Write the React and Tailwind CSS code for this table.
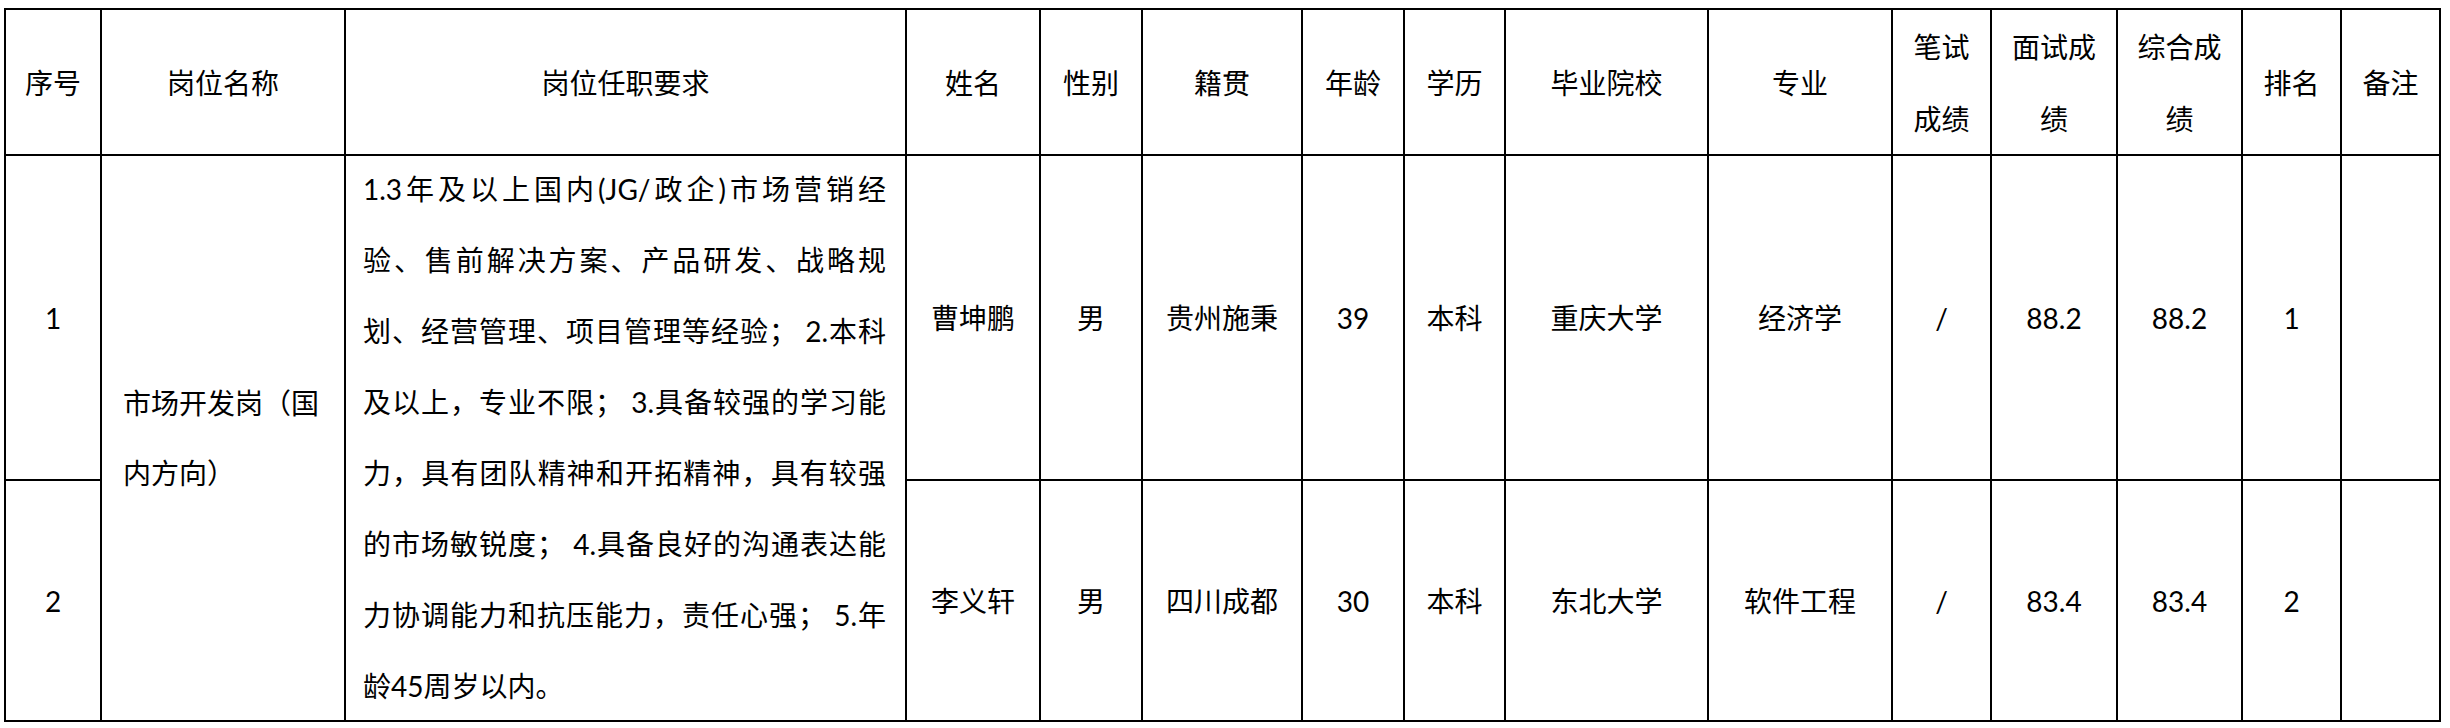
import React from 'react';

const colWidths = ['w-[96px]', 'w-[244px]', 'w-[561px]', 'w-[134px]', 'w-[102px]', 'w-[160px]', 'w-[102px]', 'w-[101px]', 'w-[203px]', 'w-[184px]', 'w-[99px]', 'w-[126px]', 'w-[125px]', 'w-[99px]', 'w-[99px]'];

const headers = [
  ['序号'],
  ['岗位名称'],
  ['岗位任职要求'],
  ['姓名'],
  ['性别'],
  ['籍贯'],
  ['年龄'],
  ['学历'],
  ['毕业院校'],
  ['专业'],
  ['笔试', '成绩'],
  ['面试成', '绩'],
  ['综合成', '绩'],
  ['排名'],
  ['备注'],
];

const requirementLines = [
  '1.3年及以上国内(JG/政企)市场营销经',
  '验、售前解决方案、产品研发、战略规',
  '划、经营管理、项目管理等经验； 2.本科',
  '及以上，专业不限； 3.具备较强的学习能',
  '力，具有团队精神和开拓精神，具有较强',
  '的市场敏锐度； 4.具备良好的沟通表达能',
  '力协调能力和抗压能力，责任心强； 5.年',
  '龄45周岁以内。',
];

const candidates = [
  { no: '1', name: '曹坤鹏', gender: '男', origin: '贵州施秉', age: '39', edu: '本科', school: '重庆大学', major: '经济学', written: '/', interview: '88.2', total: '88.2', rank: '1', note: '' },
  { no: '2', name: '李义轩', gender: '男', origin: '四川成都', age: '30', edu: '本科', school: '东北大学', major: '软件工程', written: '/', interview: '83.4', total: '83.4', rank: '2', note: '' },
];

const cell = 'border-2 border-black text-center align-middle p-0';

const App = () => {
  return (
    <div className="w-[2450px] h-[728px] bg-white pt-[8px] pl-[4px] text-black overflow-hidden" style={{ fontFamily: 'Lato, "Noto Sans CJK SC", sans-serif' }}>
      <table className="table-fixed border-collapse w-[2437px] text-[28px]">
        <colgroup>
          {colWidths.map((w, i) => (
            <col key={i} className={w} />
          ))}
        </colgroup>
        <thead>
          <tr className="h-[143px]">
            {headers.map((lines, i) => (
              <th key={i} className={`${cell} font-normal leading-[72px]`} style={{ fontFamily: '"Noto Sans CJK SC", sans-serif' }}>
                {lines.map((l, j) => (
                  <div key={j}>{l}</div>
                ))}
              </th>
            ))}
          </tr>
        </thead>
        <tbody>
          {candidates.map((c, idx) => (
            <tr key={c.no} className={idx === 0 ? 'h-[325px]' : 'h-[241px]'}>
              <td className={cell}>{c.no}</td>
              {idx === 0 && (
                <td rowSpan={2} className={`${cell} text-left pl-[21px] leading-[70px]`}>
                  <div>市场开发岗（国</div>
                  <div>内方向）</div>
                </td>
              )}
              {idx === 0 && (
                <td rowSpan={2} className={`${cell} text-left pl-[17px] pr-[19px]`}>
                  <div className="h-[556px] flex flex-col justify-center leading-[71px]">
                    {requirementLines.map((l, j) => (
                      <div key={j} className={`whitespace-nowrap ${j < requirementLines.length - 1 ? 'text-justify [text-align-last:justify]' : ''}`}>
                        {l}
                      </div>
                    ))}
                  </div>
                </td>
              )}
              <td className={cell}>{c.name}</td>
              <td className={cell}>{c.gender}</td>
              <td className={cell}>{c.origin}</td>
              <td className={cell}>{c.age}</td>
              <td className={cell}>{c.edu}</td>
              <td className={cell}>{c.school}</td>
              <td className={cell}>{c.major}</td>
              <td className={cell}>{c.written}</td>
              <td className={cell}>{c.interview}</td>
              <td className={cell}>{c.total}</td>
              <td className={cell}>{c.rank}</td>
              <td className={cell}>{c.note}</td>
            </tr>
          ))}
        </tbody>
      </table>
    </div>
  );
};

export default App;
